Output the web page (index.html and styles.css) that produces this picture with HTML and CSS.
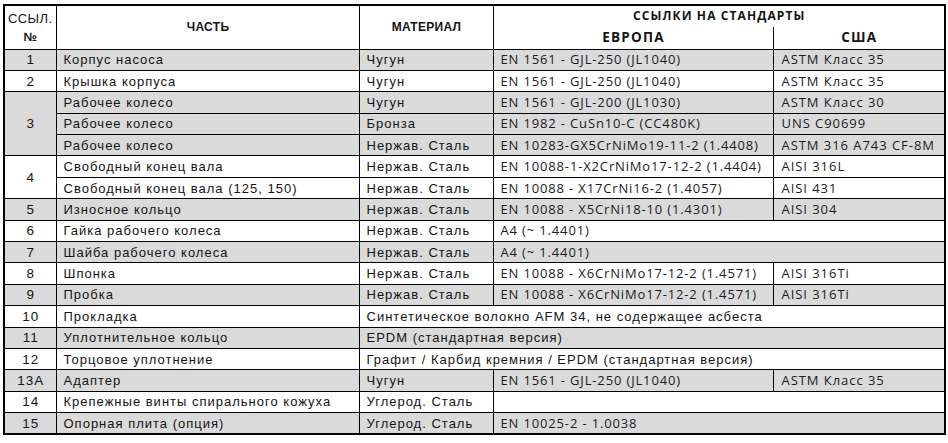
FILE: index.html
```html
<!DOCTYPE html>
<html lang="ru">
<head>
<meta charset="utf-8">
<title>Материалы</title>
<link rel="stylesheet" href="styles.css">
</head>
<body>
<table class="parts">
  <colgroup>
    <col class="c-ref"><col class="c-part"><col class="c-mat"><col class="c-eu"><col class="c-us">
  </colgroup>
  <thead>
    <tr class="h1">
      <th rowspan="2" class="h-ref"><span class="ref-top">ССЫЛ.</span><br><span class="ref-no">№</span></th>
      <th rowspan="2">ЧАСТЬ</th>
      <th rowspan="2">МАТЕРИАЛ</th>
      <th colspan="2" class="h-std">ССЫЛКИ НА СТАНДАРТЫ</th>
    </tr>
    <tr class="h2">
      <th class="h-sub">ЕВРОПА</th>
      <th class="h-sub">США</th>
    </tr>
  </thead>
  <tbody>
    <tr class="g"><td class="n">1</td><td>Корпус насоса</td><td>Чугун</td><td class="eu">EN 1561 - GJL-250 (JL1040)</td><td class="us">ASTM Класс 35</td></tr>
    <tr><td class="n">2</td><td>Крышка корпуса</td><td>Чугун</td><td class="eu">EN 1561 - GJL-250 (JL1040)</td><td class="us">ASTM Класс 35</td></tr>
    <tr class="g"><td class="n" rowspan="3">3</td><td>Рабочее колесо</td><td>Чугун</td><td class="eu">EN 1561 - GJL-200 (JL1030)</td><td class="us">ASTM Класс 30</td></tr>
    <tr class="g"><td>Рабочее колесо</td><td>Бронза</td><td class="eu">EN 1982 - CuSn10-C (CC480K)</td><td class="us">UNS C90699</td></tr>
    <tr class="g"><td>Рабочее колесо</td><td>Нержав. Сталь</td><td class="eu">EN 10283-GX5CrNiMo19-11-2 (1.4408)</td><td class="us">ASTM 316 A743 CF-8M</td></tr>
    <tr><td class="n" rowspan="2">4</td><td>Свободный конец вала</td><td>Нержав. Сталь</td><td class="eu">EN 10088-1-X2CrNiMo17-12-2 (1.4404)</td><td class="us">AISI 316L</td></tr>
    <tr><td>Свободный конец вала (125, 150)</td><td>Нержав. Сталь</td><td class="eu">EN 10088 - X17CrNi16-2 (1.4057)</td><td class="us">AISI 431</td></tr>
    <tr class="g"><td class="n">5</td><td>Износное кольцо</td><td>Нержав. Сталь</td><td class="eu">EN 10088 - X5CrNi18-10 (1.4301)</td><td class="us">AISI 304</td></tr>
    <tr><td class="n">6</td><td>Гайка рабочего колеса</td><td>Нержав. Сталь</td><td class="eu" colspan="2">A4 (~ 1.4401)</td></tr>
    <tr class="g"><td class="n">7</td><td>Шайба рабочего колеса</td><td>Нержав. Сталь</td><td class="eu" colspan="2">A4 (~ 1.4401)</td></tr>
    <tr><td class="n">8</td><td>Шпонка</td><td>Нержав. Сталь</td><td class="eu">EN 10088 - X6CrNiMo17-12-2 (1.4571)</td><td class="us">AISI 316Ti</td></tr>
    <tr class="g"><td class="n">9</td><td>Пробка</td><td>Нержав. Сталь</td><td class="eu">EN 10088 - X6CrNiMo17-12-2 (1.4571)</td><td class="us">AISI 316Ti</td></tr>
    <tr><td class="n">10</td><td>Прокладка</td><td colspan="3">Синтетическое волокно AFM 34, не содержащее асбеста</td></tr>
    <tr class="g"><td class="n">11</td><td>Уплотнительное кольцо</td><td colspan="3">EPDM (стандартная версия)</td></tr>
    <tr><td class="n">12</td><td>Торцовое уплотнение</td><td colspan="3">Графит / Карбид кремния / EPDM (стандартная версия)</td></tr>
    <tr class="g"><td class="n">13A</td><td>Адаптер</td><td>Чугун</td><td class="eu">EN 1561 - GJL-250 (JL1040)</td><td class="us">ASTM Класс 35</td></tr>
    <tr><td class="n">14</td><td>Крепежные винты спирального кожуха</td><td>Углерод. Сталь</td><td class="eu" colspan="2"></td></tr>
    <tr class="g"><td class="n">15</td><td>Опорная плита (опция)</td><td>Углерод. Сталь</td><td class="eu" colspan="2">EN 10025-2 - 1.0038</td></tr>
  </tbody>
</table>
</body>
</html>
```

FILE: styles.css
```css
html, body {
  margin: 0;
  padding: 0;
  background: #ffffff;
}

body {
  padding: 4px 0 0 3px;
}

.parts {
  border-collapse: collapse;
  table-layout: fixed;
  width: 941px;
  border: 2px solid #000;
  font-family: "Liberation Sans", Arial, sans-serif;
  font-size: 13px;
  color: #141414;
}

.c-ref { width: 52px; }
.c-part { width: 303px; }
.c-mat { width: 134px; }
.c-eu { width: 280px; }
.c-us { width: 172px; }

.parts th,
.parts td {
  border: 1px solid #000;
  padding: 0 6px 0 7px;
  line-height: 15px;
  white-space: nowrap;
  overflow: hidden;
}

.parts td {
  letter-spacing: 1px;
}

.parts th {
  font-weight: bold;
  font-size: 12px;
  text-align: center;
  background: #fff;
  letter-spacing: 0.3px;
}

.parts .h1 { height: 22px; }
.parts .h2 { height: 22px; }

.parts .h-ref {
  padding: 0;
  vertical-align: top;
  padding-top: 4px;
  line-height: 18px;
}

.ref-top {
  font-weight: normal;
  font-size: 13px;
  letter-spacing: 0.4px;
}

.ref-no {
  font-size: 12px;
}

.parts .h-std {
  font-family: "Open Sans", "DejaVu Sans", sans-serif;
  font-size: 12px;
  letter-spacing: 1.1px;
  border-bottom: none;
  padding-top: 2px;
  vertical-align: top;
}

.parts .h-sub {
  font-family: "Open Sans", "DejaVu Sans", sans-serif;
  font-size: 13.5px;
  letter-spacing: 1.2px;
  border-top: none;
  padding-bottom: 1px;
}

.parts tbody tr {
  height: 21.4px;
}

.parts tbody tr.g td {
  background: #dadada;
}

.parts td.n {
  text-align: center;
  padding: 0 0 0 1px;
  font-size: 13.5px;
}

.parts td.eu,
.parts td.us {
  font-family: "Open Sans", "DejaVu Sans", sans-serif;
  font-size: 13px;
  color: #1c1a26;
}

.parts td.eu {
  letter-spacing: 0.85px;
}

.parts td.us {
  letter-spacing: 0.95px;
  padding-left: 8px;
}
```
